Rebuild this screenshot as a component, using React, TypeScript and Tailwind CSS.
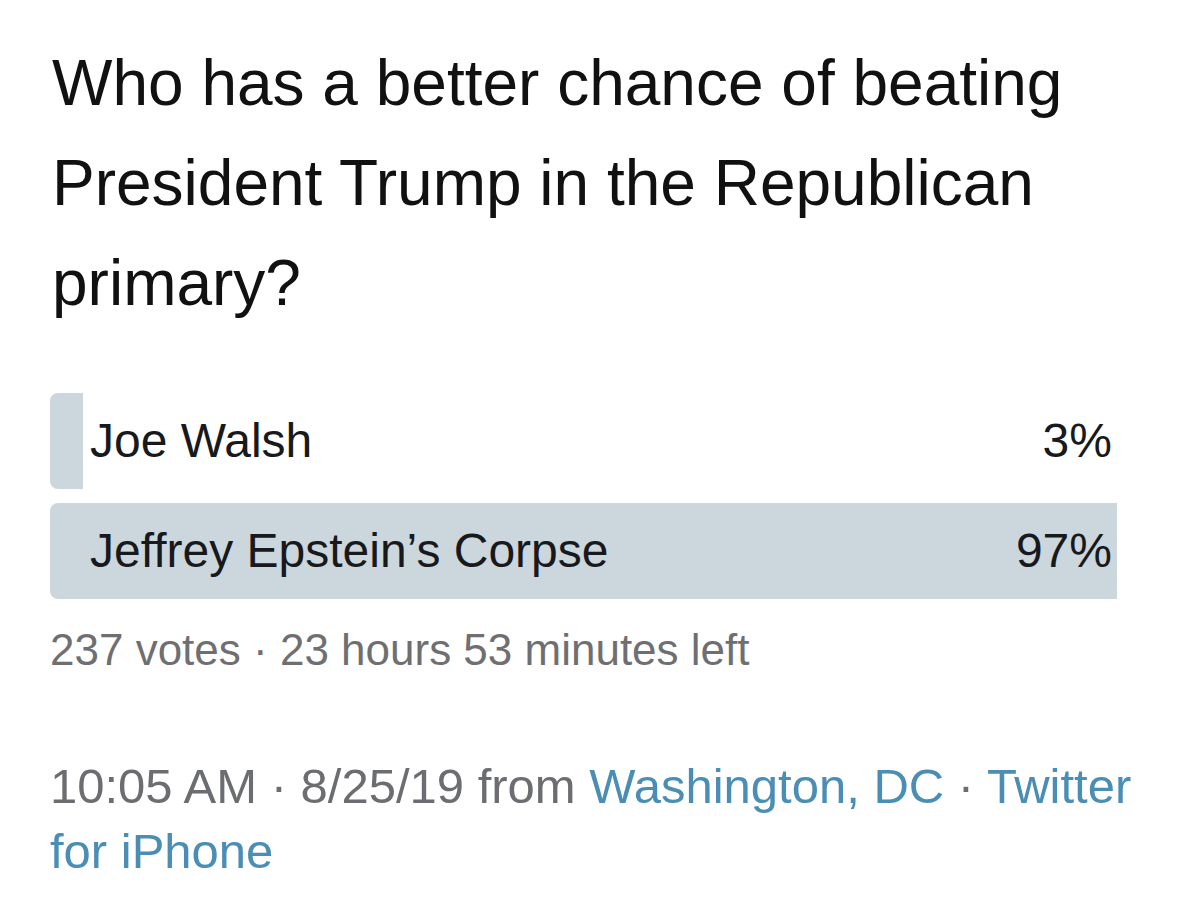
import React from "react";

const options = [
  { label: "Joe Walsh", pct: 3 },
  { label: "Jeffrey Epstein\u2019s Corpse", pct: 97 },
];

export default function App() {
  return (
    <div
      className="w-[1200px] h-[899px] bg-white overflow-hidden pl-[50px] pr-[40px] pt-[33px]"
      style={{ fontFamily: '"Liberation Sans", Arial, Helvetica, sans-serif' }}
    >
      <h1 className="text-[64px] leading-[100px] text-[#111111] font-normal pl-[2px] w-[1060px]">
        Who has a better chance of beating President Trump in the Republican primary?
      </h1>

      <div className="mt-[60px] flex flex-col gap-[14px] w-[1100px]">
        {options.map((o) => (
          <div key={o.label} className="relative h-[96px] flex items-center justify-between pl-[40px] pr-[38px]">
            <div
              className="absolute left-0 top-0 bottom-0 bg-[#ccd6dd] rounded-l-[8px]"
              style={{ width: `${o.pct}%` }}
            />
            <span className="relative text-[48px] text-[#17191c]">{o.label}</span>
            <span className="relative text-[48px] text-[#17191c]">{o.pct}%</span>
          </div>
        ))}
      </div>

      <div className="mt-[25px] text-[44px] leading-[52px] text-[#6f6f72]">
        237 votes · 23 hours 53 minutes left
      </div>

      <div className="mt-[78px] text-[49px] leading-[65px] text-[#6b6d70] w-[1100px]">
        10:05 AM · 8/25/19 from <span className="text-[#4a8db5]">Washington, DC</span> ·{" "}
        <span className="text-[#4a8db5]">Twitter for iPhone</span>
      </div>
    </div>
  );
}
